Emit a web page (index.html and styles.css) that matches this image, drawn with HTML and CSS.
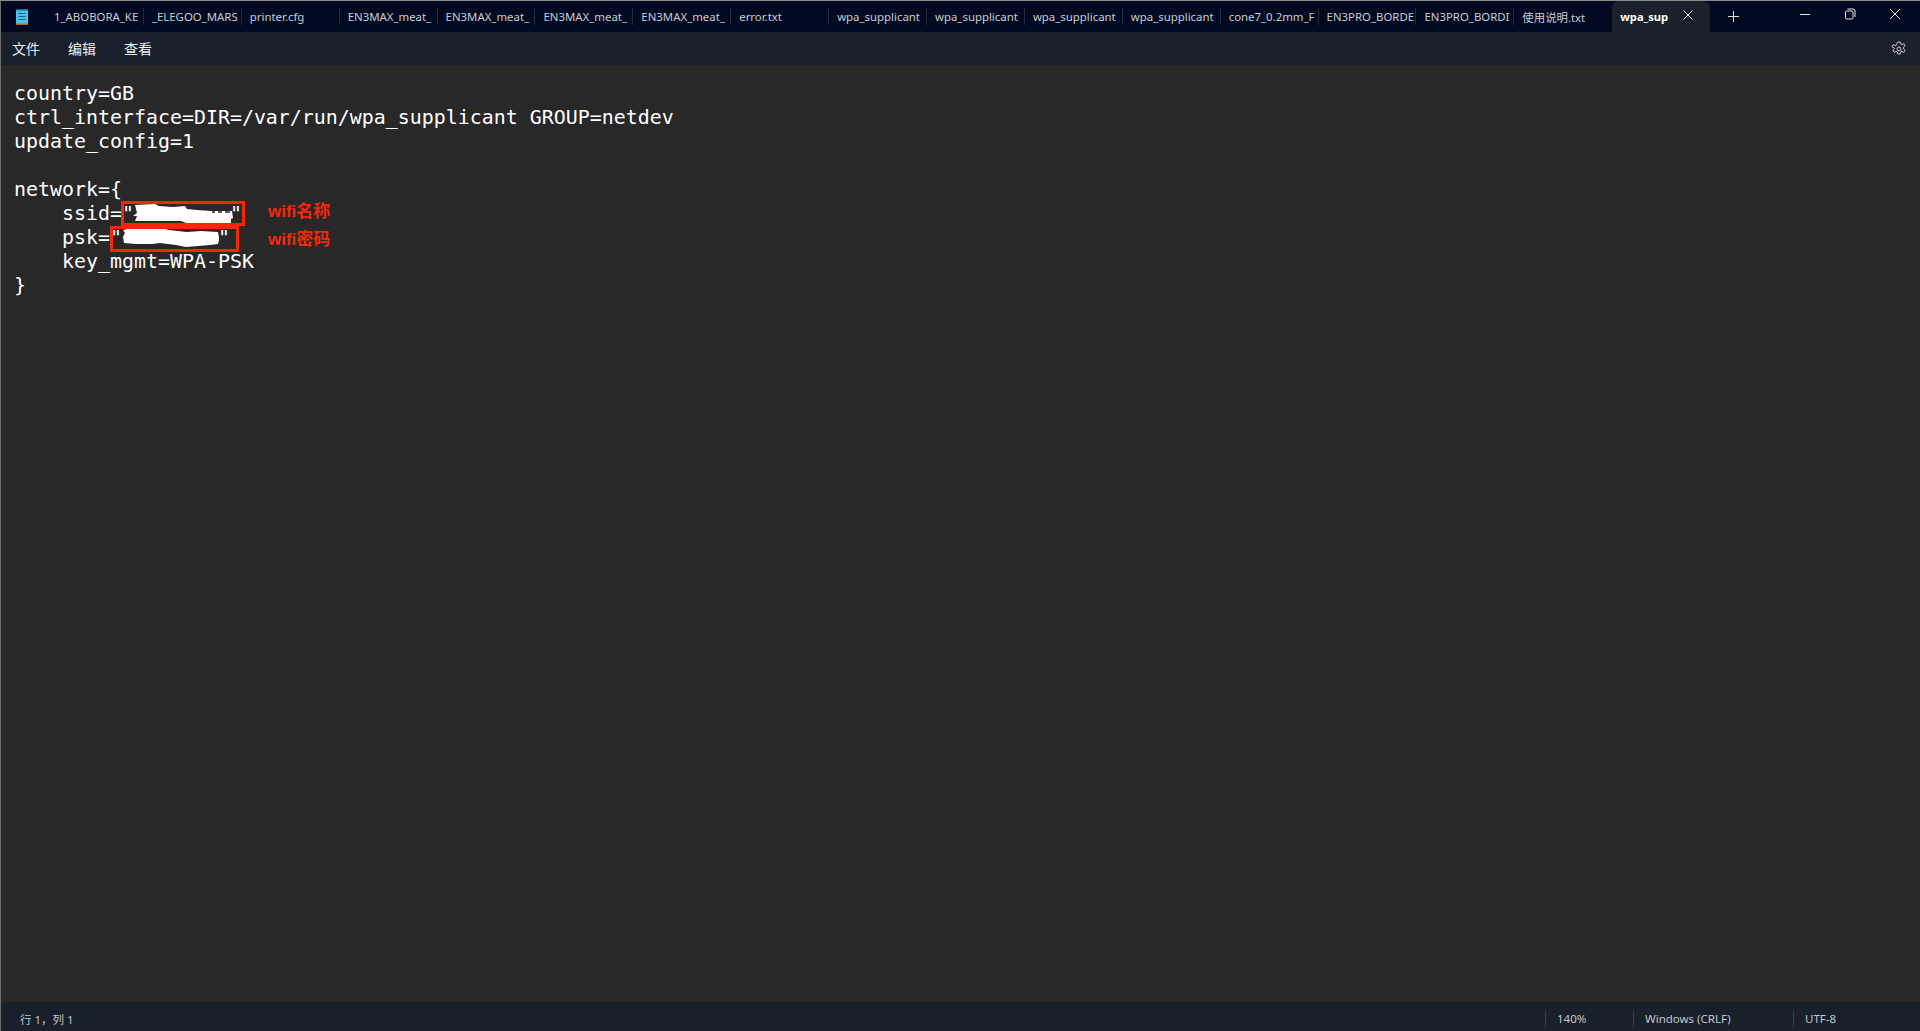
FILE: index.html
```html
<!DOCTYPE html>
<html lang="zh">
<head>
<meta charset="utf-8">
<title>wpa_supplicant</title>
<link rel="stylesheet" href="styles.css">
</head>
<body>
<div class="window">
  <header class="tabbar">
    <div class="app-icon">
      <svg width="12" height="16" viewBox="0 0 12 16"><rect width="12" height="16" fill="#4cc2ea"/><rect y="14.6" width="12" height="1.4" fill="#b5652c"/><rect y="0" width="12" height="1.5" fill="#14708e"/><path d="M2.5 4.5h7M2.5 7.5h7M2.5 10.500h7" stroke="#0f5f86" stroke-width="1"/></svg>
    </div>
    <div class="tab"><span>1_ABOBORA_KE</span></div>
    <div class="tab"><span>_ELEGOO_MARS</span></div>
    <div class="tab"><span>printer.cfg</span></div>
    <div class="tab"><span>EN3MAX_meat_</span></div>
    <div class="tab"><span>EN3MAX_meat_</span></div>
    <div class="tab"><span>EN3MAX_meat_</span></div>
    <div class="tab"><span>EN3MAX_meat_</span></div>
    <div class="tab"><span>error.txt</span></div>
    <div class="tab"><span>wpa_supplicant</span></div>
    <div class="tab"><span>wpa_supplicant</span></div>
    <div class="tab"><span>wpa_supplicant</span></div>
    <div class="tab"><span>wpa_supplicant</span></div>
    <div class="tab"><span>cone7_0.2mm_F</span></div>
    <div class="tab"><span>EN3PRO_BORDE</span></div>
    <div class="tab"><span>EN3PRO_BORDI</span></div>
    <div class="tab tab-last"><span>使用说明.txt</span></div>
    <div class="tab-active">
      <span class="tab-active-text">wpa_sup</span>
      <svg class="tab-close" width="10" height="10" viewBox="0 0 10 10"><path d="M.5.5l9 9M9.500.5l-9 9" stroke="#e8e8e8" stroke-width="1"/></svg>
    </div>
    <div class="tab-add">
      <svg width="11" height="11" viewBox="0 0 11 11"><path d="M5.500 0v11M0 5.500h11" stroke="#e0e0e0" stroke-width="1"/></svg>
    </div>
    <div class="win-controls">
      <svg width="12" height="12" viewBox="0 0 12 12"><path d="M1 6.500h10" stroke="#e6e6e6" stroke-width="1"/></svg>
      <svg width="12" height="12" viewBox="0 0 12 12"><rect x="1.500" y="3" width="7.500" height="8" rx="1.200" fill="none" stroke="#e6e6e6"/><path d="M3.500 1h5.500a2 2 0 0 1 2 2v6" fill="none" stroke="#e6e6e6"/></svg>
      <svg width="12" height="12" viewBox="0 0 12 12"><path d="M1 1l10 10M11 1L1 11" stroke="#e8e8e8" stroke-width="1"/></svg>
    </div>
  </header>
  <nav class="menubar">
    <span class="menu-item">文件</span>
    <span class="menu-item">编辑</span>
    <span class="menu-item">查看</span>
    <svg class="gear" width="16" height="16" viewBox="0 0 16 16"><path d="M6.700 1h2.600l.4 2 1.300.6 1.800-1 1.300 2.200-1.600 1.400v1.600l1.600 1.400-1.300 2.200-1.800-1-1.300.6-.4 2H6.700l-.4-2-1.300-.6-1.800 1-1.300-2.200 1.600-1.400V7.200L.9 5.800l1.300-2.200 1.800 1 1.300-.6z" fill="none" stroke="#c8c8c8"/><circle cx="8" cy="8" r="2" fill="none" stroke="#c8c8c8"/></svg>
  </nav>
  <main class="editor">
    <pre class="code"><span class="line">country=GB</span><span class="line">ctrl_interface=DIR=/var/run/wpa_supplicant GROUP=netdev</span><span class="line">update_config=1</span><span class="line"> </span><span class="line">network={</span><span class="line">    ssid="        "</span><span class="line">    psk="        "</span><span class="line">    key_mgmt=WPA-PSK</span><span class="line">}</span></pre>
    <svg class="scribble" width="140" height="56" viewBox="0 0 140 56">
      <path d="M25 7l20-1 4 2 14 1 12-1 2 3 10 1 14 1 21 0 1 7-2 1 0 7-30 2-2-3-10-1-8-3-10 0-8 0-8 0-20 0 2-5-4 0 4-3-2-8z" fill="#fff"/>
      <path d="M102 14h3M108 14h4M115 14h5" stroke="#282828" stroke-width="1.500"/>
      <path d="M13 32l10-2 6 1 16-1 10 1 4 1 18 2 14-1 17 1 1 5 0 3-1 4-8 1-24 2-10-2-16-2-8 1-16 0-12-1-1-6 2-4z" fill="#fff"/>
    </svg>
    <div class="mark mark-ssid"></div>
    <div class="mark mark-psk"></div>
    <span class="note note-ssid">wifi名称</span>
    <span class="note note-psk">wifi密码</span>
  </main>
  <footer class="statusbar">
    <span class="status-pos">行 1，列 1</span>
    <span class="status-cell status-zoom">140%</span>
    <span class="status-cell status-eol">Windows (CRLF)</span>
    <span class="status-cell status-enc">UTF-8</span>
  </footer>
</div>
</body>
</html>
```

FILE: styles.css
```css
* { box-sizing: border-box; }
html, body { margin: 0; height: 100%; }
body { background: #282828; overflow: hidden; }
.window {
  height: 1031px;
  display: flex;
  flex-direction: column;
  border-top: 1px solid #8a8a8a;
  border-left: 1px solid #6e6e6e;
  font-family: "Noto Sans", "Noto Sans CJK SC", sans-serif;
}
.tabbar {
  height: 31px;
  background: #010a21;
  display: flex;
  align-items: flex-end;
  flex: none;
}
.app-icon { width: 45px; height: 31px; padding: 7px 0 0 15px; flex: none; }
.tab {
  width: 97.9px;
  height: 31px;
  flex: none;
  padding: 0 0 0 8px;
  display: flex;
  align-items: center;
  position: relative;
  color: #c9ccd2;
  font-size: 11.4px;
  white-space: nowrap;
}
.tab::after {
  content: "";
  position: absolute;
  right: 0;
  top: 7px;
  bottom: 7px;
  width: 1px;
  background: #232a3a;
}
.tab-last::after { display: none; }
.tab-active {
  width: 98px;
  height: 31px;
  flex: none;
  background: #1b212c;
  border-radius: 8px 8px 0 0;
  display: flex;
  align-items: center;
  padding: 0 0 0 8px;
  color: #fff;
  font-size: 11.2px;
  font-weight: 700;
}
.tab-active-text { width: 63px; }
.tab-close { margin-bottom: 3px; }
.tab-add { width: 47px; height: 31px; flex: none; display: flex; align-items: center; justify-content: center; }
.win-controls {
  margin-left: auto;
  height: 31px;
  padding: 0 19px 5px 0;
  display: flex;
  align-items: center;
  gap: 33px;
}
.menubar {
  height: 33px;
  flex: none;
  background: #1b212c;
  display: flex;
  align-items: center;
  gap: 28px;
  padding: 0 13px 2px 11px;
  color: #eceff2;
  font-size: 14px;
}
.gear { margin-left: auto; margin-top: 2px; }
.editor { flex: 1; position: relative; background: #282828; }
.code {
  margin: 0;
  padding: 17px 0 0 13px;
  font-family: "DejaVu Sans Mono", monospace;
  font-size: 19.93px;
  line-height: 24px;
  color: #fff;
}
.line { display: block; width: fit-content; height: 24px; }
.scribble { position: absolute; left: 109px; top: 133px; }
.mark { position: absolute; border: 3px solid #f5260a; }
.mark-ssid { left: 120px; top: 136px; width: 124px; height: 25px; }
.mark-psk { left: 109px; top: 161px; width: 129px; height: 26px; }
.note { position: absolute; left: 267px; color: #f5260a; font-family: "Liberation Sans", "Noto Sans CJK SC", sans-serif; font-size: 17px; font-weight: 700; line-height: 20px; }
.note-ssid { top: 137px; }
.note-psk { top: 165px; }
.statusbar {
  height: 29px;
  flex: none;
  background: #18202c;
  display: flex;
  align-items: center;
  padding-top: 5px;
  color: #c4c6ca;
  font-size: 11.5px;
}
.status-pos { padding-left: 19px; margin-right: auto; }
.status-cell { height: 16px; line-height: 16px; border-left: 1px solid #39404c; padding-left: 11px; }
.status-zoom { width: 88px; }
.status-eol { width: 160px; }
.status-enc { width: 127px; }
```
